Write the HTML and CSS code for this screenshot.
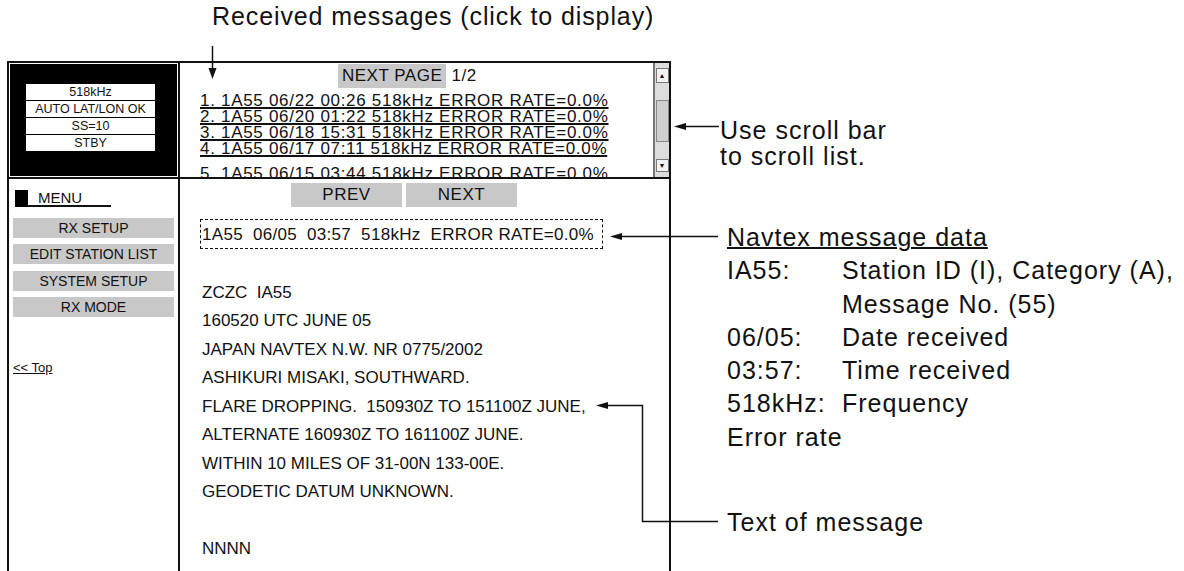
FILE: index.html
```html
<!DOCTYPE html>
<html lang="en">
<head>
  <meta charset="UTF-8">
  <title>NAVTEX Message Display</title>
  <link rel="stylesheet" href="styles.css">
</head>
<body>
  <div class="page">
    <div class="caption">Received messages (click to display)</div>

    <div class="main">
      <div class="screen">
        <div class="status-cell">
          <div class="status-bg">
            <div class="status">
              <div>518kHz</div>
              <div>AUTO LAT/LON OK</div>
              <div>SS=10</div>
              <div>STBY</div>
            </div>
          </div>
        </div>

        <div class="list-cell">
          <div class="list">
            <div class="list-head"><span class="page-btn">NEXT PAGE</span> 1/2</div>
            <a class="msg" href="#">1. 1A55 06/22 00:26 518kHz ERROR RATE=0.0%</a>
            <a class="msg" href="#">2. 1A55 06/20 01:22 518kHz ERROR RATE=0.0%</a>
            <a class="msg" href="#">3. 1A55 06/18 15:31 518kHz ERROR RATE=0.0%</a>
            <a class="msg" href="#">4. 1A55 06/17 07:11 518kHz ERROR RATE=0.0%</a>
            <a class="msg msg-last" href="#">5. 1A55 06/15 03:44 518kHz ERROR RATE=0.0%</a>
          </div>
          <div class="scrollbar">
            <div class="sb-btn">&#9650;</div>
            <div class="sb-thumb"></div>
            <div class="sb-btn sb-down">&#9660;</div>
          </div>
        </div>

        <div class="menu-cell">
          <div class="menu-title">
            <span class="menu-mark"></span>
            <span class="menu-label">MENU</span>
          </div>
          <div class="menu-list">
            <div class="menu-btn">RX SETUP</div>
            <div class="menu-btn">EDIT STATION LIST</div>
            <div class="menu-btn">SYSTEM SETUP</div>
            <div class="menu-btn">RX MODE</div>
          </div>
          <a class="top-link" href="#">&lt;&lt; Top</a>
        </div>

        <div class="view-cell">
          <div class="pager">
            <div class="pager-btn">PREV</div>
            <div class="pager-btn">NEXT</div>
          </div>
          <div class="msg-data">1A55  06/05  03:57  518kHz  ERROR RATE=0.0%</div>
          <div class="msg-text">ZCZC  IA55
160520 UTC JUNE 05
JAPAN NAVTEX N.W. NR 0775/2002
ASHIKURI MISAKI, SOUTHWARD.
FLARE DROPPING.  150930Z TO 151100Z JUNE,
ALTERNATE 160930Z TO 161100Z JUNE.
WITHIN 10 MILES OF 31-00N 133-00E.
GEODETIC DATUM UNKNOWN.

NNNN</div>
        </div>
      </div>

      <div class="notes">
        <div class="note-scroll">Use scroll bar<br>to scroll list.</div>
        <div class="note-data">
          <div class="note-title">Navtex message data</div>
          <div class="note-grid">
            <span>IA55:</span><span>Station ID (I), Category (A),</span>
            <span></span><span>Message No. (55)</span>
            <span>06/05:</span><span>Date received</span>
            <span>03:57:</span><span>Time received</span>
            <span>518kHz:</span><span>Frequency</span>
            <span>Error rate</span><span></span>
          </div>
        </div>
        <div class="note-text">Text of message</div>
      </div>
    </div>

    <svg class="leaders" width="1184" height="571" viewBox="0 0 1184 571">
      <g stroke="#111" stroke-width="1.5" fill="none">
        <line x1="212.5" y1="46" x2="212.5" y2="70"/>
        <line x1="684" y1="126.5" x2="719" y2="126.5"/>
        <line x1="620" y1="236.5" x2="718" y2="236.5"/>
        <polyline points="606,405.5 642.5,405.5 642.5,521.5 718,521.5"/>
      </g>
      <g fill="#111">
        <polygon points="208.5,68 216.5,68 212.5,79"/>
        <polygon points="674,126.5 686,123 686,130"/>
        <polygon points="610,236.5 622,233 622,240"/>
        <polygon points="596,405.5 608,402 608,409"/>
      </g>
    </svg>
  </div>
</body>
</html>
```

FILE: styles.css
```css
body {
  margin: 0;
  font-family: 'Liberation Sans', Arial, sans-serif;
  color: #111;
  background: white;
}
.page {
  position: relative;
  width: 1184px;
  height: 571px;
  overflow: hidden;
}
.caption {
  height: 60px;
  padding: 1px 0 0 212px;
  font-size: 25px;
  letter-spacing: 0.9px;
  line-height: 30px;
}
.main {
  display: flex;
  height: 510px;
}

/* receiver screen */
.screen {
  margin-left: 7px;
  width: 660px;
  display: grid;
  grid-template-columns: 169px 489px;
  grid-template-rows: 114px 1fr;
  gap: 2px;
  background: #111;
  border: 2px solid #111;
  border-bottom: none;
}
.status-cell {
  background: white;
  padding: 1px;
}
.status-bg {
  background: #000;
  height: 100%;
  padding: 20px 0 0 16px;
  box-sizing: border-box;
}
.status {
  width: 129px;
  display: grid;
  grid-template-rows: repeat(4, 16px);
  gap: 1px;
}
.status div {
  background: white;
  font-size: 12.5px;
  line-height: 16px;
  text-align: center;
}

.list-cell {
  background: white;
  display: flex;
  overflow: hidden;
}
.list {
  flex: 1;
  padding-left: 20px;
  overflow: hidden;
}
.list-head {
  margin: 1px 0 5px 138px;
  font-size: 17px;
  letter-spacing: 0.5px;
  line-height: 24px;
}
.page-btn {
  background: #c8c8c8;
  padding: 0 4px 0 4px;
  display: inline-block;
}
.msg {
  display: block;
  color: #111;
  font-size: 17px;
  letter-spacing: 0.7px;
  line-height: 16px;
  white-space: nowrap;
  text-decoration: underline;
  text-decoration-thickness: 1.5px;
}
.msg-last {
  margin-top: 9px;
}
.scrollbar {
  width: 14px;
  border-left: 2px solid #777;
  background: #dcdcdc;
  display: flex;
  flex-direction: column;
  align-items: center;
  padding-top: 5px;
}
.sb-btn {
  width: 11px;
  height: 13px;
  border: 1px solid #777;
  background: #f2f2f2;
  font-size: 7px;
  line-height: 13px;
  text-align: center;
}
.sb-thumb {
  width: 11px;
  height: 40px;
  margin-top: 17px;
  border: 1px solid #888;
  background: #cfcfcf;
}
.sb-down {
  height: 11px;
  line-height: 11px;
  margin-top: 17px;
}

/* menu */
.menu-cell {
  background: white;
  padding-top: 11px;
}
.menu-title {
  display: flex;
  margin-left: 6px;
}
.menu-mark {
  width: 13px;
  height: 17px;
  background: #000;
}
.menu-label {
  width: 73px;
  padding-left: 10px;
  font-size: 15px;
  line-height: 15px;
  border-bottom: 2px solid #111;
}
.menu-list {
  display: flex;
  flex-direction: column;
  gap: 6.3px;
  margin: 11px 0 0 4px;
}
.menu-btn {
  width: 161px;
  height: 20px;
  background: #c8c8c8;
  font-size: 14px;
  line-height: 20px;
  text-align: center;
}
.top-link {
  display: inline-block;
  margin: 43px 0 0 4px;
  color: #111;
  font-size: 13px;
  line-height: 15px;
}

/* message view */
.view-cell {
  background: white;
  padding-top: 4px;
}
.pager {
  display: flex;
  gap: 4px;
  padding-left: 111px;
}
.pager-btn {
  width: 111px;
  height: 24px;
  background: #c8c8c8;
  font-size: 17px;
  letter-spacing: 0.5px;
  line-height: 24px;
  text-align: center;
}
.msg-data {
  margin: 12px 0 0 20px;
  width: 400px;
  height: 28px;
  padding-left: 1px;
  border: 1.5px dashed #111;
  font-size: 17px;
  letter-spacing: 0.3px;
  line-height: 29px;
  white-space: pre;
}
.msg-text {
  margin: 29.5px 0 0 22px;
  font-size: 17px;
  line-height: 28.5px;
  white-space: pre;
}

/* annotations */
.notes {
  margin-left: 49px;
  font-size: 25px;
  letter-spacing: 1px;
}
.note-scroll {
  margin-top: 56px;
  line-height: 26px;
}
.note-data {
  margin-top: 52px;
  padding-left: 7px;
  line-height: 33.3px;
}
.note-title {
  text-decoration: underline;
  text-decoration-thickness: 1.5px;
}
.note-grid {
  display: grid;
  grid-template-columns: 115px auto;
}
.note-grid span {
  white-space: nowrap;
}
.note-text {
  margin-top: 55px;
  padding-left: 7px;
  line-height: 26px;
}
.leaders {
  position: absolute;
  left: 0;
  top: 0;
  pointer-events: none;
}
```
